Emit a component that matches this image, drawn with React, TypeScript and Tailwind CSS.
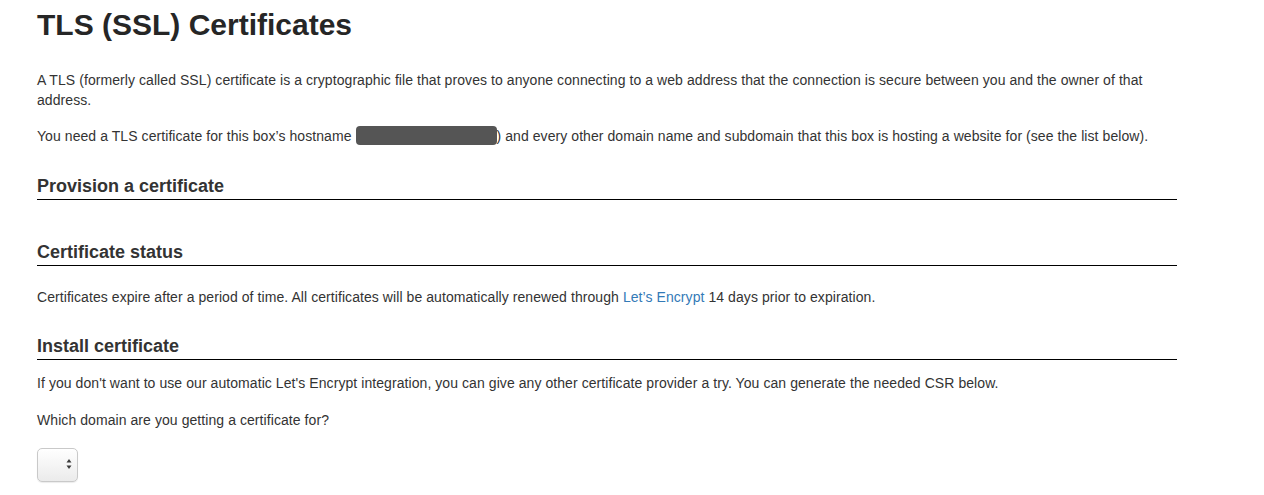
import React from "react";

function SectionHeading({ title, className = "" }: { title: string; className?: string }) {
  return (
    <h3
      className={`text-[18px] font-bold leading-[20px] tracking-normal text-[#333] pb-[3px] border-b border-black ${className}`}
    >
      {title}
    </h3>
  );
}

export default function App() {
  return (
    <div className="min-h-[495px] bg-white font-['Liberation_Sans',Arial,sans-serif] text-[14px] leading-[20px] tracking-[0.07px] text-[#333]">
      <div className="ml-[37px] w-[1140px]">
        <h1 className="pt-[7px] text-[30px] font-bold leading-[36px] tracking-normal text-[#262626]">
          TLS (SSL) Certificates
        </h1>

        <p className="mt-[27px]">
          A TLS (formerly called SSL) certificate is a cryptographic file that proves to anyone connecting to a web
          address that the connection is secure between you and the owner of that address.
        </p>
        <p className="mt-[16px]">
          You need a TLS certificate for this box’s hostname{" "}
          <span className="inline-block h-[19px] w-[141px] rounded-[4px] bg-[#555] align-[-4px] blur-[0.4px]" />) and
          every other domain name and subdomain that this box is hosting a website for (see the list below).
        </p>

        <SectionHeading title="Provision a certificate" className="mt-[30px]" />

        <SectionHeading title="Certificate status" className="mt-[42px]" />
        <p className="mt-[21px]">
          Certificates expire after a period of time. All certificates will be automatically renewed through{" "}
          <a href="#" className="text-[#337ab7]">
            Let’s Encrypt
          </a>{" "}
          14 days prior to expiration.
        </p>

        <SectionHeading title="Install certificate" className="mt-[29px]" />
        <p className="mt-[13px]">
          If you don't want to use our automatic Let's Encrypt integration, you can give any other certificate provider
          a try. You can generate the needed CSR below.
        </p>
        <p className="mt-[17px]">Which domain are you getting a certificate for?</p>

        <div className="relative mt-[18px] h-[34px] w-[41px]">
          <select className="h-full w-full appearance-none rounded-[5px] border border-[#c9c9c9] bg-gradient-to-b from-white to-[#ebebeb] shadow-[0_1px_1px_rgba(0,0,0,0.08)]" />
          <svg
            className="pointer-events-none absolute left-[29px] top-[10px]"
            width="6"
            height="12"
            viewBox="0 0 6 12"
          >
            <path d="M3 1 L5.5 4.5 H0.5 Z" fill="#3a3a3a" />
            <path d="M3 11 L5.5 7.5 H0.5 Z" fill="#3a3a3a" />
          </svg>
        </div>
      </div>
    </div>
  );
}
